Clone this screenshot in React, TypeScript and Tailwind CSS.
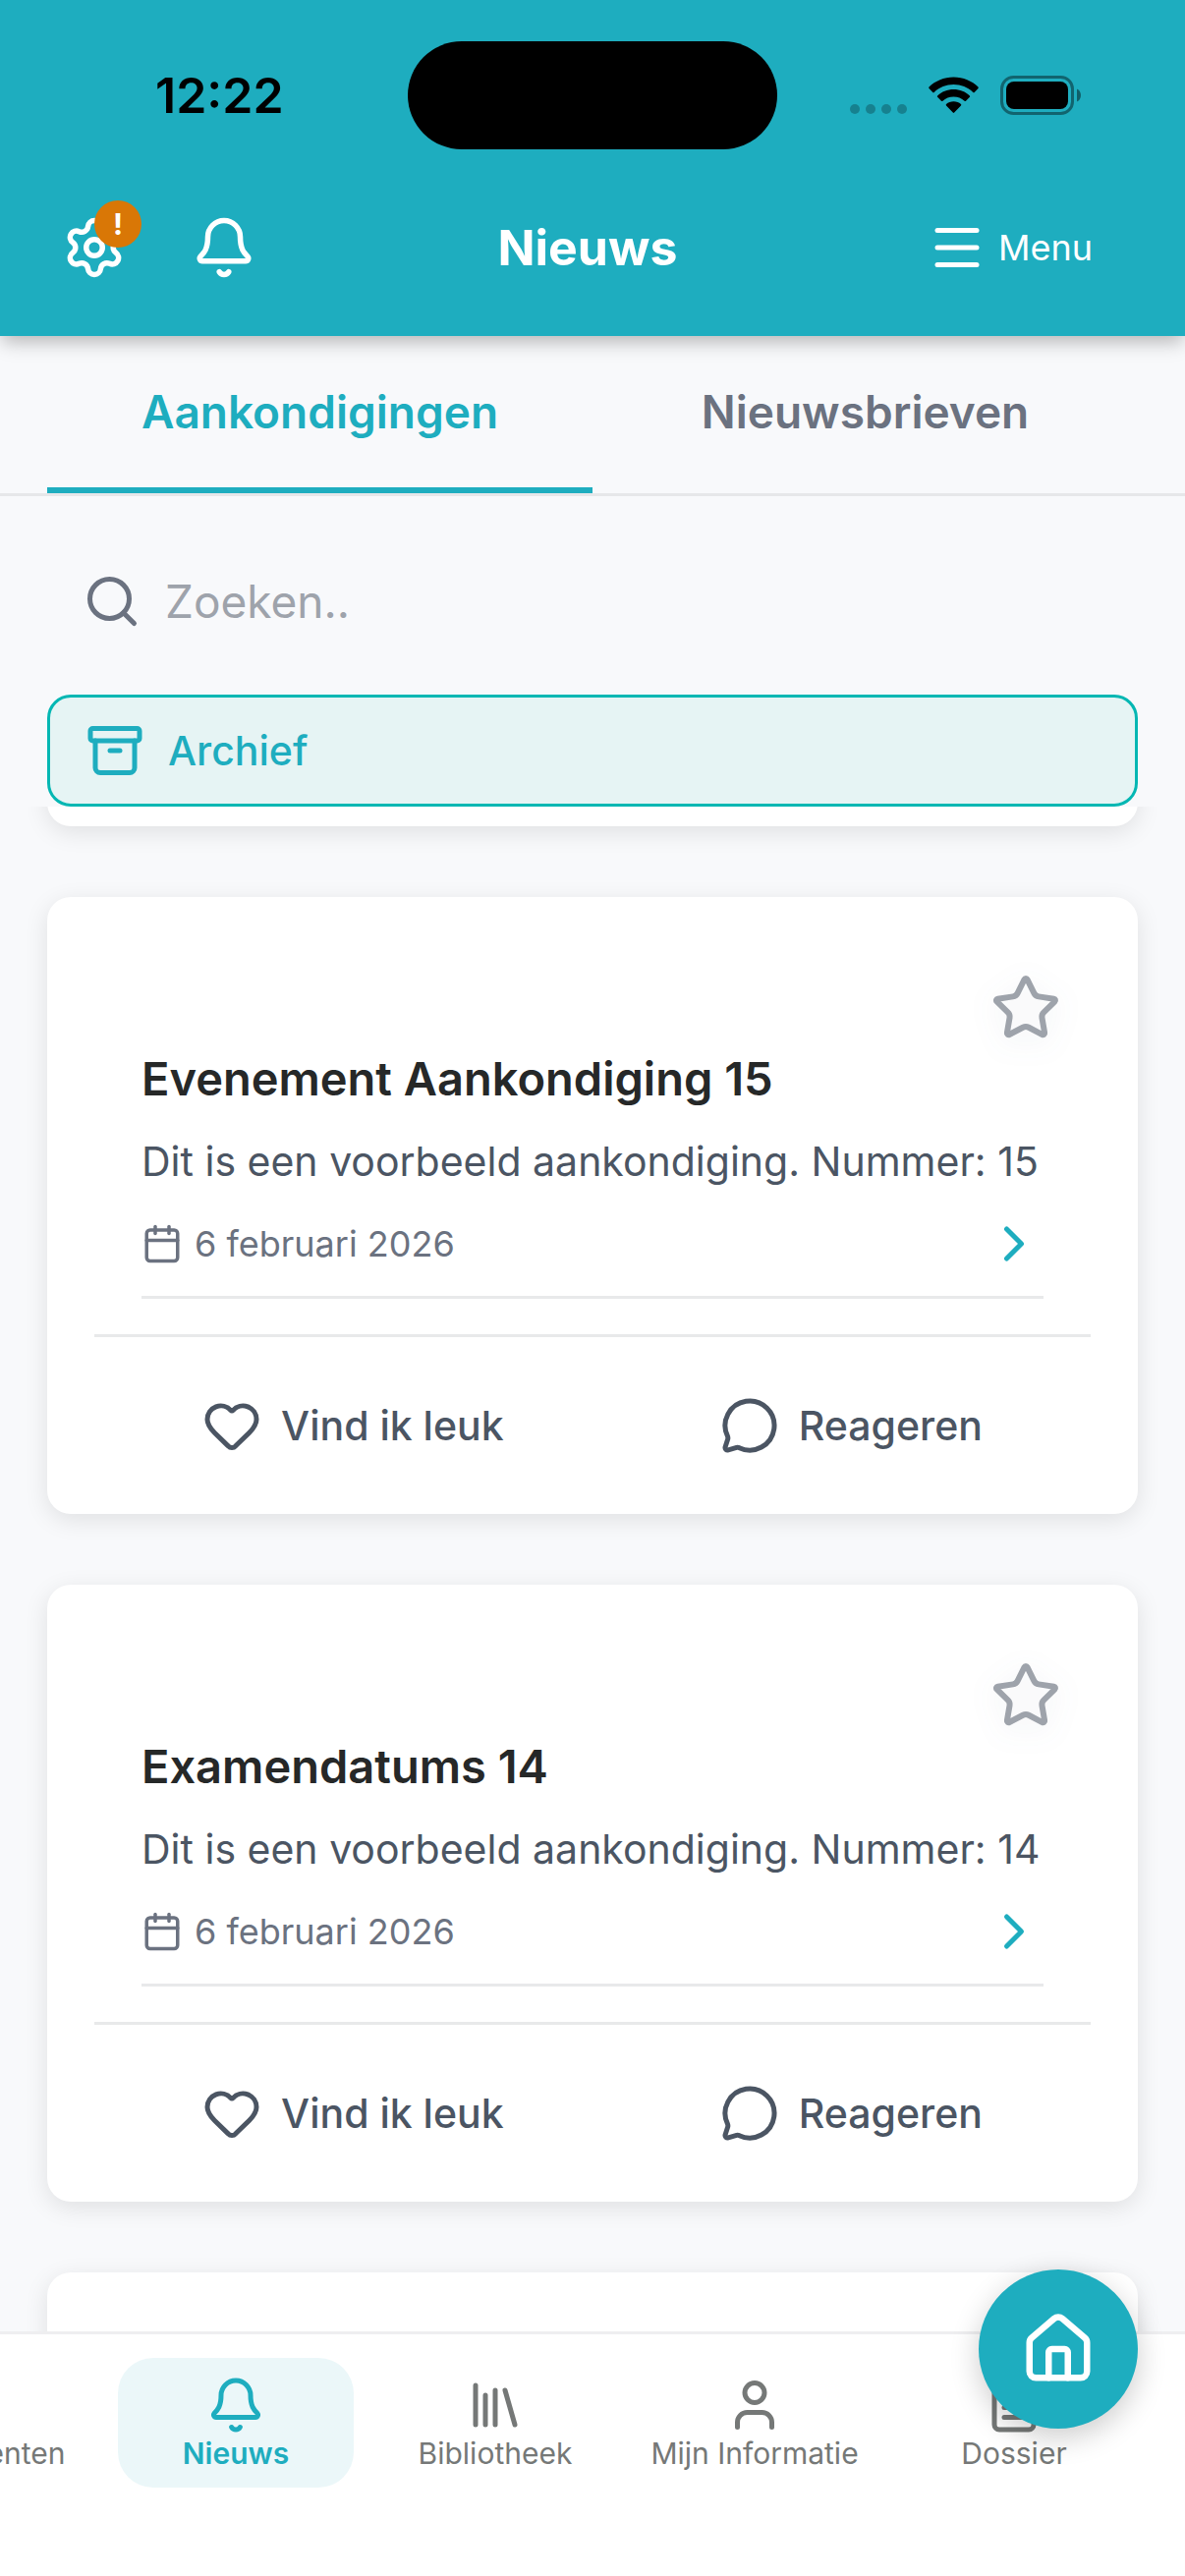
import { useLayoutEffect, useRef, useState } from 'react'
import {
  Archive,
  Bell,
  Calendar,
  ChevronRight,
  FileText,
  Heart,
  House,
  Library,
  Menu,
  MessageCircle,
  Search,
  Settings,
  Star,
  User,
  type LucideIcon,
} from 'lucide-react'
import { clsx } from 'clsx'

interface Announcement {
  id: number
  title: string
  body: string
  date: string
}

interface NavItem {
  label: string
  icon: LucideIcon
}

const TABS = ['Aankondigingen', 'Nieuwsbrieven'] as const
type Tab = (typeof TABS)[number]

const ANNOUNCEMENTS: Announcement[] = [
  { id: 16, title: 'Praktijkdag 16', body: 'Dit is een voorbeeld aankondiging. Nummer: 16', date: '6 februari 2026' },
  { id: 15, title: 'Evenement Aankondiging 15', body: 'Dit is een voorbeeld aankondiging. Nummer: 15', date: '6 februari 2026' },
  { id: 14, title: 'Examendatums 14', body: 'Dit is een voorbeeld aankondiging. Nummer: 14', date: '6 februari 2026' },
  { id: 13, title: 'Lesmateriaal 13', body: 'Dit is een voorbeeld aankondiging. Nummer: 13', date: '6 februari 2026' },
]

const NAV: NavItem[] = [
  { label: 'Documenten', icon: FileText },
  { label: 'Nieuws', icon: Bell },
  { label: 'Bibliotheek', icon: Library },
  { label: 'Mijn Informatie', icon: User },
  { label: 'Dossier', icon: FileText },
]

// where the list and the nav strip were left
const LIST_SCROLL = 632
const NAV_SCROLL = 168

function StatusBar() {
  return (
    <div className="grid grid-cols-[1fr_auto_1fr] items-center pt-[42px] text-black">
      <span className="pl-[158px] text-[50px] leading-none font-semibold">12:22</span>
      <div className="h-[110px] w-[376px] rounded-full bg-black" />
      <div className="flex items-center justify-end gap-[22px] pr-[106px]">
        <svg width="58" height="38" viewBox="0 0 58 38" className="fill-black/25" aria-hidden="true">
          <circle cx="5" cy="33" r="5" />
          <circle cx="21" cy="33" r="5" />
          <circle cx="37" cy="33" r="5" />
          <circle cx="53" cy="33" r="5" />
        </svg>
        <svg width="51" height="38" viewBox="0 0 51 38" aria-hidden="true">
          <path d="M25.5 .5C35.3 .5 44.2 4.3 50.5 10.6c.4.4.4 1 0 1.4l-3.8 3.9c-.4.4-1 .4-1.4 0C40 10.9 33.1 8 25.5 8S11 10.9 5.7 15.9c-.4.4-1 .4-1.4 0L.5 12c-.4-.4-.4-1 0-1.4C6.8 4.3 15.7.5 25.5.5Z" />
          <path d="M25.5 13c6.3 0 12.1 2.4 16.4 6.4.4.4.4 1 0 1.4L38 24.7c-.4.4-1 .4-1.4 0-3-2.7-6.8-4.2-11.1-4.2s-8.1 1.5-11.1 4.2c-.4.4-1 .4-1.4 0l-3.9-3.9c-.4-.4-.4-1 0-1.4C13.4 15.4 19.2 13 25.5 13Z" />
          <path d="M25.5 25.3c2.9 0 5.5 1 7.5 2.7.4.4.4 1 0 1.4l-6.8 7.2c-.4.4-1 .4-1.4 0L18 29.4c-.4-.4-.4-1 0-1.4 2-1.7 4.6-2.7 7.5-2.7Z" />
        </svg>
        <svg width="82" height="40" viewBox="0 0 82 40" aria-hidden="true">
          <rect x="1.5" y="1.5" width="72" height="37" rx="12" fill="none" stroke="black" strokeOpacity=".42" strokeWidth="3" />
          <rect x="6" y="6" width="63" height="28" rx="8" />
          <path d="M78 13.5c2.5 1 4 3.6 4 6.5s-1.5 5.5-4 6.5Z" fillOpacity=".45" />
        </svg>
      </div>
    </div>
  )
}

function Header() {
  return (
    <header className="relative z-20 bg-[#1eadbf] shadow-[0_8px_18px_-2px_rgba(0,0,0,0.27)]">
      <StatusBar />
      <div className="flex items-center justify-between pt-[52px] pr-[70px] pb-[42px] pl-12 text-white">
        <div className="flex gap-9">
          <button type="button" aria-label="Instellingen" className="relative flex size-24 items-center justify-center">
            <Settings size={66} />
            <span className="absolute top-0 right-0 flex size-12 items-center justify-center rounded-full bg-[#d97706] text-[30px] font-bold">
              !
            </span>
          </button>
          <button type="button" aria-label="Meldingen" className="flex size-24 items-center justify-center">
            <Bell size={66} />
          </button>
        </div>
        <h1 className="text-[50px] leading-[60px] font-bold">Nieuws</h1>
        <button type="button" className="flex items-center gap-3 px-6 text-[36px]">
          <Menu size={60} />
          Menu
        </button>
      </div>
    </header>
  )
}

function AnnouncementCard({ item }: { item: Announcement }) {
  return (
    <article className="shrink-0 rounded-3xl bg-white px-12 shadow-[0_6px_24px_rgba(0,0,0,0.1)]">
      <div className="border-b-[3px] border-[#e8e9ea] pb-9">
        <div className="mx-12 border-b-[3px] border-[#e8e9ea] pt-[77px] pb-[23px]">
          <div className="-mr-[18px] flex justify-end">
            <button type="button" aria-label="Favoriet" className="text-[#9ea3ab]">
              <Star size={72} className="drop-shadow-[0_6px_14px_rgba(60,80,120,0.1)]" />
            </button>
          </div>
          <h2 className="text-[47px] leading-[72px] font-semibold text-[#262828]">{item.title}</h2>
          <p className="mt-4 text-[41px] leading-[64px] text-[#4b5563]">{item.body}</p>
          <div className="mt-[22px] flex items-center gap-3 text-[36px] text-[#6b7280]">
            <Calendar size={42} />
            <time className="flex-1 leading-[60px]">{item.date}</time>
            <ChevronRight size={60} className="text-[#1eadbf]" />
          </div>
        </div>
      </div>
      <div className="flex justify-around py-[60px] text-[41px] leading-[60px] font-medium text-[#4b5563]">
        <button type="button" className="flex items-center gap-5">
          <Heart size={60} />
          Vind ik leuk
        </button>
        <button type="button" className="flex items-center gap-5">
          <MessageCircle size={60} />
          Reageren
        </button>
      </div>
    </article>
  )
}

function BottomNav() {
  const ref = useRef<HTMLElement>(null)

  useLayoutEffect(() => {
    if (ref.current) ref.current.scrollLeft = NAV_SCROLL
  }, [])

  return (
    <nav
      ref={ref}
      className="flex shrink-0 gap-6 overflow-x-auto border-t-[3px] border-[#eeeef0] bg-white pt-6 pr-[54px] pb-[90px] pl-6 [scrollbar-width:none]"
    >
      {NAV.map(({ label, icon: Icon }) => (
        <a
          key={label}
          href="#"
          className={clsx(
            'flex h-[132px] w-60 shrink-0 flex-col items-center rounded-[36px] pt-[18px] text-[30px] leading-[38px]',
            label === 'Nieuws' ? 'bg-[#ebf7f9] font-semibold text-[#1eadbf]' : 'text-[#757877]'
          )}
        >
          <Icon size={60} />
          {label}
        </a>
      ))}
    </nav>
  )
}

export default function App() {
  const [tab, setTab] = useState<Tab>('Aankondigingen')
  const listRef = useRef<HTMLElement>(null)

  useLayoutEffect(() => {
    if (listRef.current) listRef.current.scrollTop = LIST_SCROLL
  }, [])

  return (
    <div className="relative flex h-screen flex-col overflow-hidden bg-[#f8f9fb] font-['Inter',sans-serif]">
      <Header />

      {/* Tabs */}
      <div className="flex border-b-[3px] border-[#e6e7e9] px-12">
        {TABS.map((t) => (
          <button
            key={t}
            type="button"
            onClick={() => setTab(t)}
            className={clsx(
              'flex-1 border-b-[6px] py-12 text-[46px] leading-[58px] font-semibold',
              t === tab ? 'border-[#1eadbf] text-[#1eadbf]' : 'border-transparent text-[#6b7280]'
            )}
          >
            {t}
          </button>
        ))}
      </div>

      {/* Search + archive */}
      <div className="flex flex-col px-12 pt-9">
        <label className="flex h-[142px] items-center gap-6 px-9 text-[#6b7280]">
          <Search size={60} className="shrink-0" />
          <input
            type="text"
            aria-label="Zoeken"
            placeholder="Zoeken.."
            className="w-full bg-transparent text-[46px] outline-none placeholder:text-[#9ea3ab]"
          />
        </label>
        <button
          type="button"
          className="mt-6 flex items-center gap-6 rounded-3xl border-[3px] border-[#04b7b3] bg-[#e6f4f4] px-9 py-6 text-[41px] leading-[60px] font-medium text-[#1eadbf]"
        >
          <Archive size={60} />
          Archief
        </button>
      </div>

      <main
        ref={listRef}
        className="flex flex-1 flex-col gap-[72px] overflow-y-auto px-12 py-6 [scrollbar-width:none]"
      >
        {ANNOUNCEMENTS.map((a) => (
          <AnnouncementCard key={a.id} item={a} />
        ))}
      </main>

      <BottomNav />

      <button
        type="button"
        aria-label="Home"
        className="absolute right-12 bottom-[150px] z-30 flex size-[162px] items-center justify-center rounded-full bg-[#1eadbf] text-white shadow-[0_9px_30px_rgba(0,0,0,0.2)]"
      >
        <House size={78} />
      </button>
    </div>
  )
}
